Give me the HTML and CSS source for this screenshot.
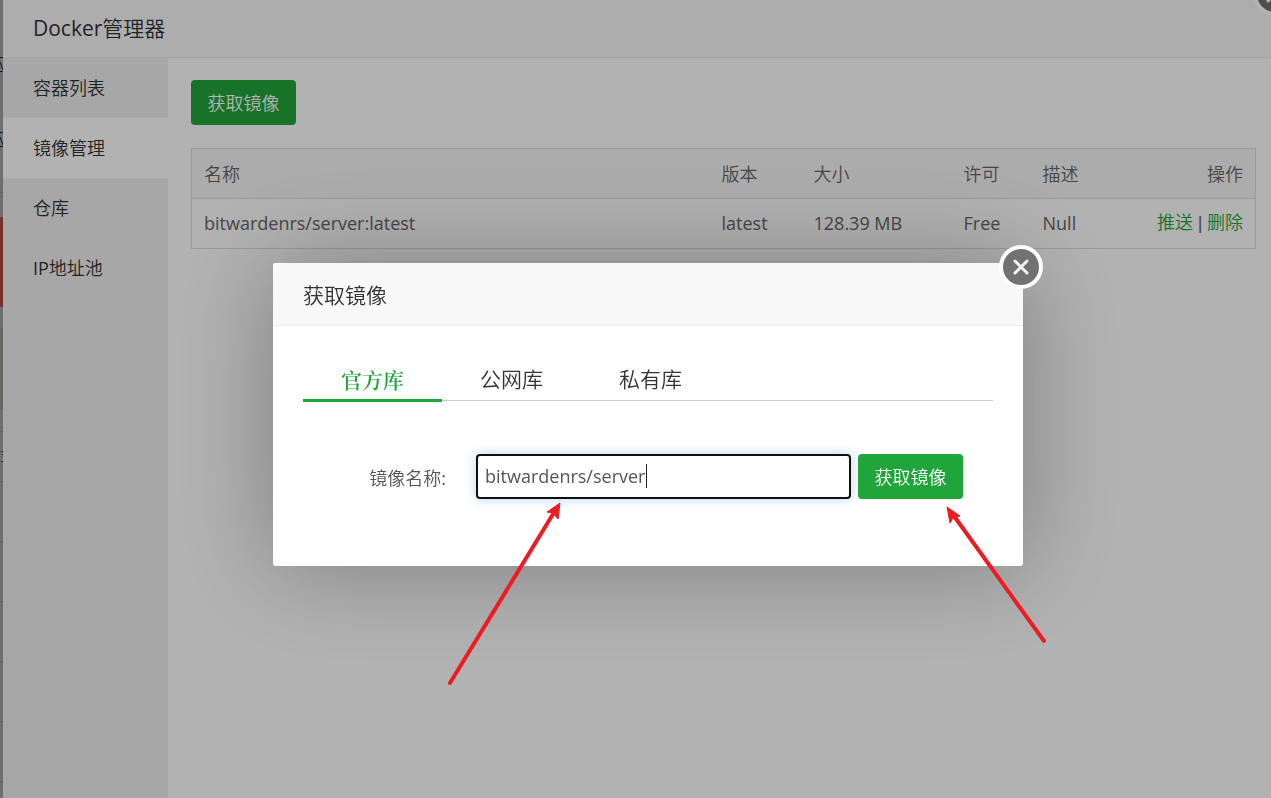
FILE: index.html
```html
<!DOCTYPE html>
<html lang="zh-CN">
<head>
<meta charset="utf-8">
<title>Docker管理器</title>
<link rel="stylesheet" href="styles.css">
</head>
<body>
<div class="page">
  <div class="backdrop" aria-hidden="true">
    <svg class="backdrop-art" width="3" height="798" viewBox="0 0 3 798">
      <path fill="#93a1ab" d="M0 57h3v15H0zM0 132h3v15H0z"/>
      <path fill="none" stroke="#222" d="M0 57.500h3M0 62l3 8M0 71.500h3M0 132.500h3M0 137l3 8M0 146.500h3"/>
      <path fill="#a8443f" d="M0 217h3v90H0z"/>
      <path fill="#8b9583" d="M0 328h3v81H0z"/>
      <path fill="none" stroke="#8c8c8c" d="M0 192.500h3M0 431.500h3M0 481.500h3M0 541.500h3M0 601.500h3M0 661.500h3M0 721.500h3M0 781.500h3"/>
      <path fill="none" stroke="#4a3020" d="M1 451.500h2M2 454.500h1M1 461.500h2"/>
    </svg>
  </div>
  <div class="panel">
    <header class="panel-header">
      <h1 class="panel-title">Docker管理器</h1>
      <button class="close panel-close" type="button" aria-label="关闭">
        <svg width="46" height="46" viewBox="0 0 46 46"><circle cx="23" cy="23" r="20" fill="#6f6f6f" stroke="#fff" stroke-width="4"/><path d="M16 16l14 14M30 16L16 30" stroke="#fff" stroke-width="3" stroke-linecap="round"/></svg>
      </button>
    </header>
    <div class="panel-body">
      <nav class="sidebar">
        <a class="side-item" href="#">容器列表</a>
        <a class="side-item active" href="#">镜像管理</a>
        <a class="side-item" href="#">仓库</a>
        <a class="side-item" href="#">IP地址池</a>
      </nav>
      <main class="content">
        <button class="btn" type="button">获取镜像</button>
        <table class="images">
          <colgroup><col class="c-name"><col class="c-version"><col class="c-size"><col class="c-license"><col class="c-desc"><col></colgroup>
          <thead>
            <tr><th>名称</th><th>版本</th><th>大小</th><th>许可</th><th>描述</th><th class="ops">操作</th></tr>
          </thead>
          <tbody>
            <tr><td>bitwardenrs/server:latest</td><td>latest</td><td>128.39 MB</td><td>Free</td><td>Null</td><td class="ops"><a href="#">推送</a> <span class="bar">|</span> <a href="#">删除</a></td></tr>
          </tbody>
        </table>
      </main>
    </div>
  </div>
</div>
<div class="overlay">
  <section class="modal" role="dialog" aria-labelledby="modal-title">
    <header class="modal-header"><h2 class="modal-title" id="modal-title">获取镜像</h2></header>
    <div class="modal-body">
      <div class="tabs" role="tablist">
        <button class="tab active" type="button" role="tab" aria-selected="true">官方库</button>
        <button class="tab" type="button" role="tab">公网库</button>
        <button class="tab" type="button" role="tab">私有库</button>
      </div>
      <form class="form">
        <label class="label" for="image-name">镜像名称:</label>
        <div class="field">
          <input class="input" id="image-name" type="text" value="bitwardenrs/server">
          <span class="caret"></span>
        </div>
        <button class="btn" type="button">获取镜像</button>
      </form>
    </div>
    <button class="close modal-close" type="button" aria-label="关闭">
      <svg width="46" height="46" viewBox="0 0 46 46"><circle cx="23" cy="23" r="20" fill="#727272" stroke="#fff" stroke-width="4"/><path d="M17 17l12 12M29 17L17 29" stroke="#f4f4f4" stroke-width="3" stroke-linecap="round"/></svg>
    </button>
    <svg class="arrows" width="780" height="430" viewBox="0 0 780 430" aria-hidden="true">
      <path d="M177 420L280 251M771 378L681 253" fill="none" stroke="#ed1c24" stroke-width="4" stroke-linecap="round"/>
      <path d="M287 240l-13 9 6 1 5 6zM674 244l3 16 3-5 7-2z" fill="#ed1c24" stroke="#ed1c24"/>
    </svg>
  </section>
</div>
</body>
</html>
```
FILE: styles.css
```css
* { box-sizing: border-box; }

body {
  margin: 0;
  overflow: hidden;
  color: #666;
  background: #fff;
  font: 18px/24px "Open Sans", "Noto Sans CJK SC DemiLight", "Noto Sans CJK SC", sans-serif;
}

button, input { font: inherit; }
a { text-decoration: none; }
h1, h2 { margin: 0; font-size: 21px; font-weight: 400; color: #333; }

.page { display: flex; min-height: 100vh; }
.backdrop { width: 3px; background: #a0a0a0; overflow: hidden; }
.backdrop-art { display: block; }

.panel { flex: 1; display: flex; flex-direction: column; position: relative; overflow: hidden; }
.panel-header {
  display: flex;
  align-items: center;
  height: 58px;
  padding: 0 30px 2px;
  background: #f8f8f8;
  border-bottom: 1px solid #eee;
}
.panel-body { flex: 1; display: flex; }

.sidebar { width: 165px; background: #f0f0f0; }
.side-item { display: block; padding: 18px 30px; color: #333; }
.side-item.active { background: #fff; }

.content { flex: 1; min-width: 0; padding: 22px 15px 22px 23px; }

.btn {
  width: 105px;
  height: 45px;
  padding: 0;
  color: #fff;
  background: #20a53a;
  border: 0;
  border-radius: 4px;
  font-weight: 500;
}

.images {
  width: 100%;
  margin-top: 23px;
  table-layout: fixed;
  border-collapse: collapse;
  border: 1px solid #ddd;
}
.images th, .images td { height: 50px; padding: 0 12px; text-align: left; font-weight: 400; border-bottom: 1px solid #ddd; }
.images th { background: #f6f6f6; }
.images td { padding-bottom: 2px; }
.images .ops { text-align: right; }
.images a { color: #20a53a; }
.bar { font-family: "Liberation Sans", sans-serif; }
.c-name { width: 518px; }
.c-version { width: 92px; }
.c-size { width: 150px; }
.c-license { width: 79px; }
.c-desc { width: 90px; }

.close { position: absolute; padding: 0; border: 0; background: none; line-height: 0; }
.panel-close { top: -29px; right: -27px; }
.modal-close { top: -19px; right: -21px; }

.overlay {
  position: fixed;
  inset: 0;
  display: flex;
  align-items: center;
  justify-content: center;
  padding: 31px 0 0 25px;
  background: rgba(0, 0, 0, .3);
}
.modal {
  position: relative;
  width: 750px;
  background: #fff;
  border-radius: 3px;
  box-shadow: 1px 1px 100px rgba(0, 0, 0, .3);
}
.modal-header { padding: 20px 30px 18px; background: #f8f8f8; border-bottom: 1px solid #eee; border-radius: 3px 3px 0 0; }
.modal-body { padding: 33px 30px 67px; }

.tabs { display: flex; border-bottom: 1px solid #ccc; }
.tab {
  width: 139px;
  height: 43px;
  margin-bottom: -2px;
  padding: 0 0 1px;
  color: #333;
  font-size: 21px;
  background: none;
  border: 0;
  border-bottom: 3px solid transparent;
}
.tab.active {
  color: #20a53a;
  border-color: #20a53a;
  font-family: "Noto Serif CJK SC", "Noto Serif SC", "Liberation Serif", "Noto Sans CJK SC", serif;
  font-weight: 600;
}

.form { display: flex; align-items: center; margin-top: 53px; padding-right: 30px; }
.label { width: 143px; margin-right: 30px; padding-top: 2px; text-align: right; color: #555; }
.field { position: relative; flex: 1; margin-right: 7px; }
.input {
  display: block;
  width: 100%;
  height: 45px;
  padding: 0 7px 2px;
  color: #555;
  background: #fff;
  border: 2px solid #101010;
  border-radius: 4px;
  outline: 0;
  box-shadow: 0 0 12px rgba(102, 175, 233, .5);
}
.caret { position: absolute; left: 170px; top: 10px; width: 1px; height: 24px; background: #222; }

.arrows { position: absolute; left: 0; top: 0; overflow: visible; pointer-events: none; }
```
